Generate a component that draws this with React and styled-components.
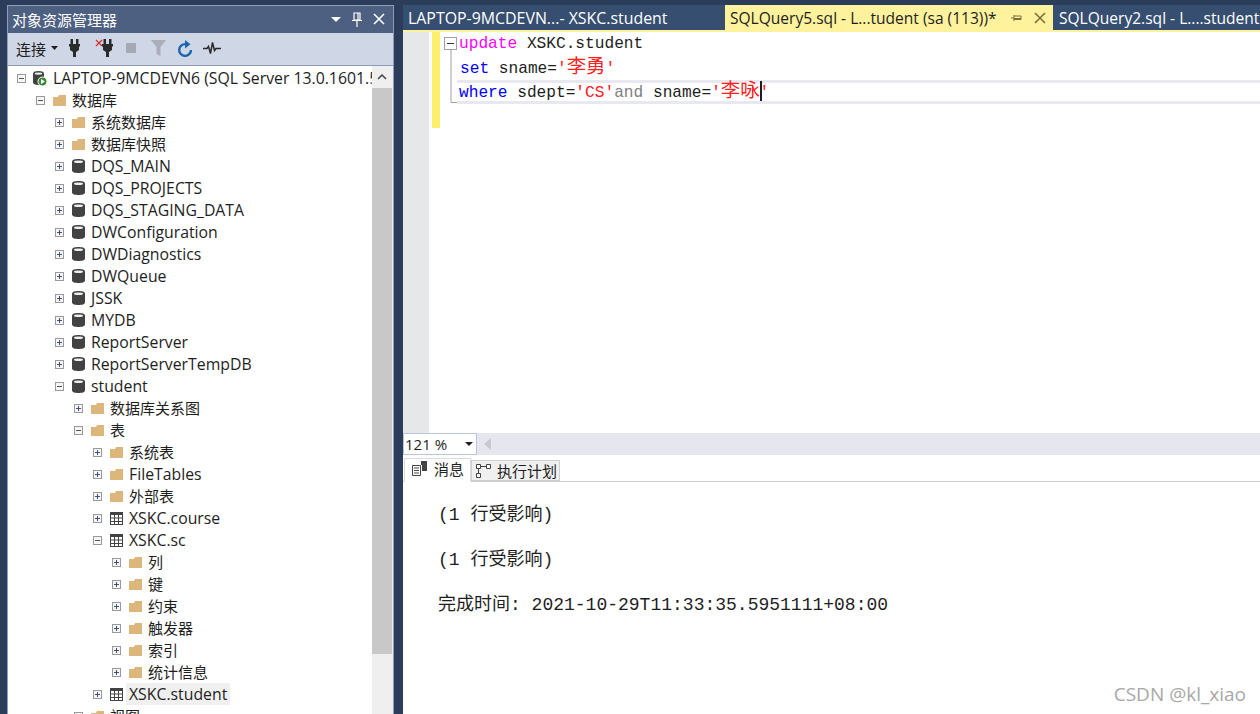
import React from "react";
import styled, { createGlobalStyle } from "styled-components";

const UI_FONT = `"Open Sans", "Noto Sans CJK SC", sans-serif`;
const MONO_FONT = `"Liberation Mono", "Noto Sans CJK SC", monospace`;

const GlobalStyle = createGlobalStyle`
  html, body { margin: 0; padding: 0; background: #293955; overflow: hidden; }
  * { box-sizing: border-box; }
`;

const Page = styled.div`
  width: 1260px;
  height: 714px;
  padding-top: 5px;
  display: flex;
  overflow: hidden;
  background: #2c3c5b;
  font-family: ${UI_FONT};
  position: relative;
`;

const Explorer = styled.aside`
  width: 387px;
  margin-left: 7px;
  height: 709px;
  display: flex;
  flex-direction: column;
  border: 1px solid #8e9cba;
  border-bottom: 0;
  background: #fff;
`;

const TitleBar = styled.div`
  height: 27px;
  flex: none;
  display: flex;
  align-items: center;
  justify-content: space-between;
  padding: 0 8px 1px 4px;
  background: #4d6082;
  color: #fff;
  font-size: 15px;
`;

const TitleIcons = styled.div`
  display: flex;
  align-items: center;
  gap: 11px;
`;

const Toolbar = styled.div`
  height: 33px;
  flex: none;
  display: flex;
  align-items: center;
  padding: 0 0 2px 8px;
  background: #cfd6e5;
  color: #1e1e1e;
  font-size: 15px;
  border-bottom: 1px solid #8e9cba;
`;

const ConnectLabel = styled.span`
  width: 31px;
`;

const ToolSlot = styled.span`
  display: inline-flex;
  justify-content: center;
  width: ${(p) => p.$w}px;
`;

const TreeArea = styled.div`
  flex: 1;
  min-height: 0;
  display: flex;
  overflow: hidden;
`;

const Tree = styled.div`
  width: 364px;
  flex: none;
  padding-top: 1px;
  overflow: hidden;
`;

const Row = styled.div`
  height: 22px;
  display: flex;
  align-items: center;
  padding-left: ${(p) => 9 + p.$level * 19}px;
  white-space: nowrap;
  color: #1e1e1e;
  font-size: 15px;
`;

const IconSlot = styled.span`
  width: 14px;
  height: 14px;
  flex: none;
  margin-left: 7px;
  display: flex;
  align-items: center;
  justify-content: center;
`;

const Label = styled.span`
  margin-left: 3px;
  padding: 0 3px;
  height: 22px;
  line-height: 22px;
  font-size: ${(p) => (p.$latin ? 15.8 : 15)}px;
  background: ${(p) => (p.$hover ? "#f0f0f0" : "transparent")};
`;

const ScrollTrack = styled.div`
  flex: 1;
  display: flex;
  flex-direction: column;
  background: #efefef;
`;

const ScrollUp = styled.div`
  width: 20px;
  height: 22px;
  flex: none;
  display: flex;
  align-items: center;
  justify-content: center;
`;

const ScrollThumb = styled.div`
  width: 20px;
  height: 566px;
  flex: none;
  background: #c8c8c8;
`;

const Workspace = styled.main`
  margin-left: 9px;
  width: 857px;
  height: 709px;
  display: flex;
  flex-direction: column;
  background: #fff;
`;

const TabStrip = styled.div`
  height: 27px;
  flex: none;
  display: flex;
  border-bottom: 2px solid #fff29d;
  background: #2c3c5b;
  overflow: hidden;
`;

const DocTab = styled.div`
  width: ${(p) => p.$w}px;
  flex: none;
  height: 25px;
  display: flex;
  align-items: center;
  padding-left: ${(p) => p.$pad || 5}px;
  white-space: nowrap;
  overflow: hidden;
  font-size: ${(p) => p.$size}px;
  color: ${(p) => (p.$active ? "#1e1e1e" : "#fff")};
  background: ${(p) => (p.$active ? "#fff29d" : "#364e6f")};
`;

const TabIcons = styled.span`
  display: flex;
  align-items: center;
  gap: 12px;
  margin-left: 13px;
`;

const Editor = styled.div`
  height: 401px;
  flex: none;
  display: flex;
  overflow: hidden;
`;

const Gutter = styled.div`
  width: 26px;
  flex: none;
  background: #e6e7e8;
`;

const ChangeBar = styled.div`
  width: 8px;
  height: 96px;
  flex: none;
  margin-left: 3px;
  background: #fdee6b;
`;

const Outline = styled.div`
  width: 19px;
  flex: none;
  padding: 5px 0 0 4px;
`;

const Code = styled.div`
  flex: 1;
  min-width: 0;
  font-family: ${MONO_FONT};
  font-size: 16.17px;
`;

const CodeLine = styled.div`
  height: 24px;
  line-height: 24px;
  white-space: pre;
  padding-left: ${(p) => p.$indent || 0}px;
  color: #1e1e1e;
  ${(p) =>
    p.$current &&
    `
    box-shadow: inset 0 3px 0 #e8e8f0, inset 0 -3px 0 #e8e8f0;
    margin-left: -2px;
    padding-left: 2px;
  `}
`;

const Keyword = styled.span`
  color: ${(p) => p.$c};
`;

const Han = styled.span`
  font-size: 19.4px;
  color: #ff2020;
`;

const Caret = styled.span`
  display: inline-block;
  width: 2px;
  height: 20px;
  margin-right: -2px;
  vertical-align: -4px;
  background: #1e1e1e;
`;

const ZoomBar = styled.div`
  height: 22px;
  flex: none;
  display: flex;
  align-items: center;
  background: #e6e7ee;
`;

const ZoomCombo = styled.div`
  width: 74px;
  height: 22px;
  display: flex;
  align-items: center;
  justify-content: space-between;
  padding: 0 3px 0 1px;
  background: #fff;
  border: 1px solid #b9c5db;
  font-size: 15px;
  color: #1e1e1e;
`;

const ScrollLeft = styled.span`
  margin-left: 7px;
  width: 0;
  height: 0;
  border-top: 6px solid transparent;
  border-bottom: 6px solid transparent;
  border-right: 7px solid #c6c9cf;
`;

const ResultTabs = styled.div`
  height: 27px;
  flex: none;
  display: flex;
  align-items: flex-end;
  padding: 3px 0 0 1px;
  border-bottom: 1px solid #cfcfcf;
`;

const ResultTab = styled.div`
  width: ${(p) => p.$w}px;
  height: ${(p) => (p.$active ? 24 : 21)}px;
  margin-bottom: ${(p) => (p.$active ? -1 : 0)}px;
  padding-bottom: ${(p) => (p.$active ? 3 : 0)}px;
  display: flex;
  align-items: center;
  gap: ${(p) => (p.$active ? 7 : 6)}px;
  padding-left: ${(p) => (p.$active ? 7 : 4)}px;
  font-size: 15px;
  color: #1e1e1e;
  background: ${(p) => (p.$active ? "#fff" : "#f0f0f0")};
  border: 1px solid ${(p) => (p.$active ? "#dcdcdc" : "#cfcfcf")};
  border-bottom-color: ${(p) => (p.$active ? "#fff" : "#cfcfcf")};
`;

const Messages = styled.div`
  flex: 1;
  padding: 21px 0 0 35px;
  font-family: ${MONO_FONT};
  font-size: 18px;
  color: #1e1e1e;
`;

const Message = styled.div`
  height: 45px;
  line-height: 24px;
  white-space: pre;
`;

const Watermark = styled.div`
  position: absolute;
  right: 14px;
  bottom: 7px;
  font-size: 19px;
  color: #a8a8a8;
  font-family: "Open Sans", sans-serif;
`;

const Expander = ({ open }) => (
  <svg width="9" height="9" viewBox="0 0 9 9" style={{ flex: "none" }}>
    <rect x="0.5" y="0.5" width="8" height="8" fill="#f6f6f6" stroke="#999" />
    <path d="M2 4.5h5" stroke={open ? "#555" : "#3d4f85"} />
    {!open && <path d="M4.5 2v5" stroke="#3d4f85" />}
  </svg>
);

const Folder = () => (
  <svg width="13" height="11" viewBox="0 0 13 11">
    <path d="M0 2h5l1-2h7v11H0z" fill="#dcb67a" />
  </svg>
);

const Database = () => (
  <svg width="13" height="14" viewBox="0 0 13 14">
    <path d="M0 2.5C0 .8 3 0 6.5 0S13 .8 13 2.5v9c0 1.7-3 2.5-6.5 2.5S0 13.2 0 11.5z" fill="#424242" />
    <ellipse cx="6.5" cy="2.7" rx="4.6" ry="1.3" fill="#f0eff1" />
  </svg>
);

const ServerDb = () => (
  <svg width="14" height="15" viewBox="0 0 14 15">
    <path d="M0 2.5C0 .8 2.5 0 5.5 0S11 .8 11 2.5v9c0 1.7-2.5 2.5-5.5 2.5S0 13.2 0 11.5z" fill="#424242" />
    <ellipse cx="5.5" cy="2.6" rx="3.8" ry="1.2" fill="#f0eff1" />
    <circle cx="9.5" cy="10.5" r="4.5" fill="#388a34" stroke="#fff" />
    <path d="M8 8l4 2.5L8 13z" fill="#fff" />
  </svg>
);

const Table = () => (
  <svg width="13" height="13" viewBox="0 0 13 13">
    <rect width="13" height="13" fill="#424242" />
    <path d="M1 3h3v2.5H1zM5 3h3v2.5H5zM9 3h3v2.5H9zM1 6.5h3V9H1zM5 6.5h3V9H5zM9 6.5h3V9H9zM1 10h3v2H1zM5 10h3v2H5zM9 10h3v2H9z" fill="#fff" />
  </svg>
);

const icons = { folder: Folder, db: Database, server: ServerDb, table: Table };

const PLUG_PATH = "M1.5 0h2.5v5h3V0h2.5v5H11v2.5h-1V11l-3 2v5H4v-5l-3-2V7.5H0V5h1.5z";

const Plug = () => (
  <svg width="11" height="18" viewBox="0 0 11 18">
    <path d={PLUG_PATH} fill="#2b2b2b" />
  </svg>
);

const CrossPlug = () => (
  <svg width="18" height="18" viewBox="0 0 18 18">
    <path d="M1 1l6 6M7 1L1 7" stroke="#d0352b" strokeWidth="1.3" />
    <path d={PLUG_PATH} fill="#2b2b2b" transform="translate(7 0)" />
  </svg>
);

const Pin = ({ color = "#fff", small }) =>
  small ? (
    <svg width="12" height="10" viewBox="0 0 12 10">
      <path d="M1 5h3M4 2v6M4 3h7v3.5H4M4 5.5h7" stroke={color} fill="none" />
    </svg>
  ) : (
    <svg width="10" height="15" viewBox="0 0 10 15">
      <path d="M2 1h6v7H2zM6 1v7M0 8.5h10M5 9v6" stroke={color} strokeWidth="1.2" fill="none" />
    </svg>
  );

const Cross = ({ color = "#fff", size = 12 }) => (
  <svg width={size} height={size} viewBox="0 0 12 12">
    <path d="M1 1l10 10M11 1L1 11" stroke={color} strokeWidth="1.6" />
  </svg>
);

const rows = [
  [0, "open", "server", "LAPTOP-9MCDEVN6 (SQL Server 13.0.1601.5"],
  [1, "open", "folder", "数据库"],
  [2, "", "folder", "系统数据库"],
  [2, "", "folder", "数据库快照"],
  [2, "", "db", "DQS_MAIN"],
  [2, "", "db", "DQS_PROJECTS"],
  [2, "", "db", "DQS_STAGING_DATA"],
  [2, "", "db", "DWConfiguration"],
  [2, "", "db", "DWDiagnostics"],
  [2, "", "db", "DWQueue"],
  [2, "", "db", "JSSK"],
  [2, "", "db", "MYDB"],
  [2, "", "db", "ReportServer"],
  [2, "", "db", "ReportServerTempDB"],
  [2, "open", "db", "student"],
  [3, "", "folder", "数据库关系图"],
  [3, "open", "folder", "表"],
  [4, "", "folder", "系统表"],
  [4, "", "folder", "FileTables"],
  [4, "", "folder", "外部表"],
  [4, "", "table", "XSKC.course"],
  [4, "open", "table", "XSKC.sc"],
  [5, "", "folder", "列"],
  [5, "", "folder", "键"],
  [5, "", "folder", "约束"],
  [5, "", "folder", "触发器"],
  [5, "", "folder", "索引"],
  [5, "", "folder", "统计信息"],
  [4, "", "table", "XSKC.student", true],
  [3, "open", "folder", "视图"],
];

export default function App() {
  return (
    <Page>
      <GlobalStyle />
      <Explorer>
        <TitleBar>
          对象资源管理器
          <TitleIcons>
            <svg width="10" height="5" viewBox="0 0 10 5">
              <path d="M0 0h10L5 5z" fill="#fff" />
            </svg>
            <Pin />
            <Cross />
          </TitleIcons>
        </TitleBar>
        <Toolbar>
          <ConnectLabel>连接</ConnectLabel>
          <svg width="7" height="4" viewBox="0 0 7 4" style={{ marginLeft: 4 }}>
            <path d="M0 0h7L3.5 4z" fill="#1e1e1e" />
          </svg>
          <ToolSlot $w={32}><Plug /></ToolSlot>
          <ToolSlot $w={28}><CrossPlug /></ToolSlot>
          <ToolSlot $w={26}>
            <svg width="10" height="10"><rect width="10" height="10" fill="#a4a9b4" /></svg>
          </ToolSlot>
          <ToolSlot $w={28}>
            <svg width="15" height="16" viewBox="0 0 15 16">
              <path d="M0 0h15L9.5 7v9l-4-2V7z" fill="#a9aeb8" />
            </svg>
          </ToolSlot>
          <ToolSlot $w={26}>
            <svg width="16" height="17" viewBox="0 0 16 17">
              <path d="M8.5 4.1A5.9 5.9 0 1 0 14 10" fill="none" stroke="#1c66ae" strokeWidth="2.4" />
              <path d="M8 0l5.5 4.2L8 8.4z" fill="#1c66ae" />
            </svg>
          </ToolSlot>
          <ToolSlot $w={28}>
            <svg width="18" height="12" viewBox="0 0 18 12">
              <path d="M0 6.5h4l1.5-2 2 7 2-11 2 8 1.5-2H18" fill="none" stroke="#2b2b2b" strokeWidth="1.5" />
            </svg>
          </ToolSlot>
        </Toolbar>
        <TreeArea>
          <Tree>
            {rows.map(([level, open, icon, text, hover]) => {
              const Icon = icons[icon];
              return (
                <Row key={text} $level={level}>
                  <Expander open={open === "open"} />
                  <IconSlot><Icon /></IconSlot>
                  <Label $hover={hover} $latin={/^[\x00-\x7f]+$/.test(text)}>{text}</Label>
                </Row>
              );
            })}
          </Tree>
          <ScrollTrack>
            <ScrollUp>
              <svg width="10" height="6" viewBox="0 0 10 6">
                <path d="M1 5l4-4 4 4" fill="none" stroke="#444" strokeWidth="1.5" />
              </svg>
            </ScrollUp>
            <ScrollThumb />
          </ScrollTrack>
        </TreeArea>
      </Explorer>
      <Workspace>
        <TabStrip>
          <DocTab $w={322} $size={15.9}>LAPTOP-9MCDEVN...- XSKC.student</DocTab>
          <DocTab $w={328} $size={15.55} $active>
            SQLQuery5.sql - L...tudent (sa (113))*
            <TabIcons>
              <Pin small color="#7b6f3a" />
              <Cross color="#7b6f3a" />
            </TabIcons>
          </DocTab>
          <DocTab $w={207} $size={15.55} $pad={6}>SQLQuery2.sql - L....student</DocTab>
        </TabStrip>
        <Editor>
          <Gutter />
          <ChangeBar />
          <Outline>
            <svg width="14" height="67" viewBox="0 0 14 67">
              <rect x="0.5" y="0.5" width="12" height="12" fill="#fff" stroke="#a0a0a0" />
              <path d="M3 6.5h7" stroke="#333" />
              <path d="M7 13v52.5h6" fill="none" stroke="#a0a0a0" />
            </svg>
          </Outline>
          <Code>
            <CodeLine>
              <Keyword $c="#ff00ff">update</Keyword> XSKC.student
            </CodeLine>
            <CodeLine $indent={1}>
              <Keyword $c="#0000ff">set</Keyword> sname=<Keyword $c="#ff2020">'<Han>李勇</Han>'</Keyword>
            </CodeLine>
            <CodeLine $current>
              <Keyword $c="#0000ff">where</Keyword> sdept=<Keyword $c="#ff2020">'CS'</Keyword>
              <Keyword $c="#808080">and</Keyword> sname=<Keyword $c="#ff2020">'<Han>李咏</Han><Caret />'</Keyword>
            </CodeLine>
          </Code>
        </Editor>
        <ZoomBar>
          <ZoomCombo>
            121 %
            <svg width="8" height="4" viewBox="0 0 8 4">
              <path d="M0 0h8L4 4z" fill="#1e1e1e" />
            </svg>
          </ZoomCombo>
          <ScrollLeft />
        </ZoomBar>
        <ResultTabs>
          <ResultTab $w={67} $active>
            <svg width="15" height="15" viewBox="0 0 15 15">
              <path d="M.5 4.5h8v10h-8zM2 7h5M2 9.5h5M2 12h5" fill="#fff" stroke="#444" />
              <path d="M9 0h6v10h-5V4H9z" fill="#444" />
            </svg>
            消息
          </ResultTab>
          <ResultTab $w={89}>
            <svg width="15" height="15" viewBox="0 0 15 15">
              <path d="M.5 1.5h4v4h-4zM10.5 1.5h4v4h-4zM.5 10.5h4v4h-4zM5 3.5h5M2.5 6v4" fill="#fff" stroke="#444" />
            </svg>
            执行计划
          </ResultTab>
        </ResultTabs>
        <Messages>
          <Message>(1 行受影响)</Message>
          <Message>(1 行受影响)</Message>
          <Message>完成时间: 2021-10-29T11:33:35.5951111+08:00</Message>
        </Messages>
      </Workspace>
      <Watermark>CSDN @kl_xiao</Watermark>
    </Page>
  );
}
